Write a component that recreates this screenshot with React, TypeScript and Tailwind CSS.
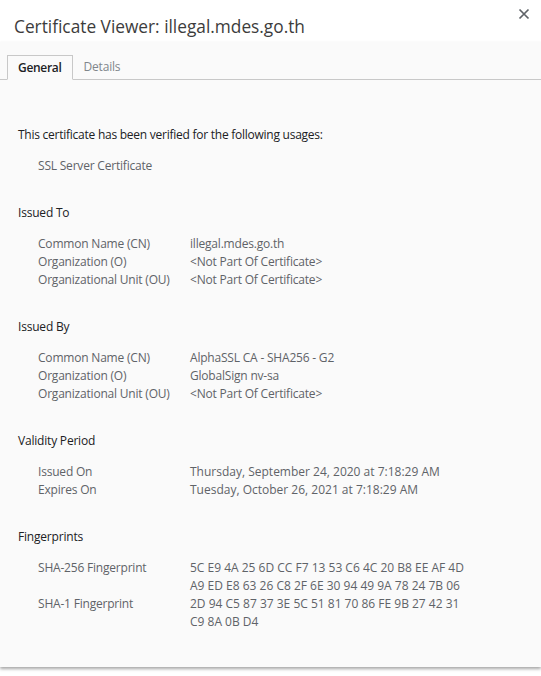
import React from "react";

const Row = ({ label, value, plain }: { label: string; value: React.ReactNode; plain?: boolean }) => (
  <div className="flex leading-[18px]">
    <div className="w-[152px] shrink-0 tracking-[-0.2px]">{label}</div>
    <div className={plain ? "" : "tracking-[-0.2px]"}>{value}</div>
  </div>
);

const Section = ({ title, children }: { title: string; children: React.ReactNode }) => (
  <div className="mt-[29px]">
    <div className="leading-[18px] text-[#202124] tracking-[-0.2px]">{title}</div>
    <div className="mt-[13px] pl-[20px] text-[#5f6368]">{children}</div>
  </div>
);

export default function App() {
  return (
    <div
      className="w-[541px] h-[676px] bg-white relative overflow-hidden text-[12px]"
      style={{ fontFamily: '"Open Sans", "Noto Sans", sans-serif' }}
    >
      <div className="h-[42px] pl-[14px] pt-[14px]">
        <div className="text-[17.3px] leading-[26px] text-[#3c3c3c]">Certificate Viewer: illegal.mdes.go.th</div>
      </div>
      <button className="absolute right-[11px] top-[8px] text-[#5f6368]">
        <svg width="12" height="12" viewBox="0 0 12 12">
          <path d="M1.5 1.5 L10.5 10.5 M10.5 1.5 L1.5 10.5" stroke="#5f6368" strokeWidth="1.7" />
        </svg>
      </button>
      <div className="bg-[#fafafa] h-[625px] shadow-[0_2px_3px_rgba(0,0,0,0.35)]">
        <div className="pt-[13px] flex border-b border-[#c8c8c8] pl-[7px]">
          <div className="h-[25px] -mb-px px-[10px] flex items-center border border-[#c8c8c8] border-b-[#fafafa] bg-[#fafafa] font-semibold text-[#202124] tracking-[-0.3px]">
            General
          </div>
          <div className="h-[24px] px-[11px] flex items-center text-[#80868b] tracking-[-0.2px]">Details</div>
        </div>
        <div className="pl-[18px] pt-[46px]">
          <div className="leading-[18px] text-[#202124] tracking-[-0.25px]">This certificate has been verified for the following usages:</div>
          <div className="mt-[13px] pl-[20px] leading-[18px] text-[#5f6368] tracking-[-0.2px]">SSL Server Certificate</div>
          <Section title="Issued To">
            <Row label="Common Name (CN)" value="illegal.mdes.go.th" />
            <Row label="Organization (O)" value="<Not Part Of Certificate>" />
            <Row label="Organizational Unit (OU)" value="<Not Part Of Certificate>" />
          </Section>
          <Section title="Issued By">
            <Row label="Common Name (CN)" value="AlphaSSL CA - SHA256 - G2" />
            <Row label="Organization (O)" value="GlobalSign nv-sa" />
            <Row label="Organizational Unit (OU)" value="<Not Part Of Certificate>" />
          </Section>
          <Section title="Validity Period">
            <Row label="Issued On" value="Thursday, September 24, 2020 at 7:18:29 AM" plain />
            <Row label="Expires On" value="Tuesday, October 26, 2021 at 7:18:29 AM" plain />
          </Section>
          <Section title="Fingerprints">
            <Row
              plain
              label="SHA-256 Fingerprint"
              value={
                <>
                  <div>5C E9 4A 25 6D CC F7 13 53 C6 4C 20 B8 EE AF 4D</div>
                  <div>A9 ED E8 63 26 C8 2F 6E 30 94 49 9A 78 24 7B 06</div>
                </>
              }
            />
            <Row
              plain
              label="SHA-1 Fingerprint"
              value={
                <>
                  <div>2D 94 C5 87 37 3E 5C 51 81 70 86 FE 9B 27 42 31</div>
                  <div>C9 8A 0B D4</div>
                </>
              }
            />
          </Section>
        </div>
      </div>
    </div>
  );
}
